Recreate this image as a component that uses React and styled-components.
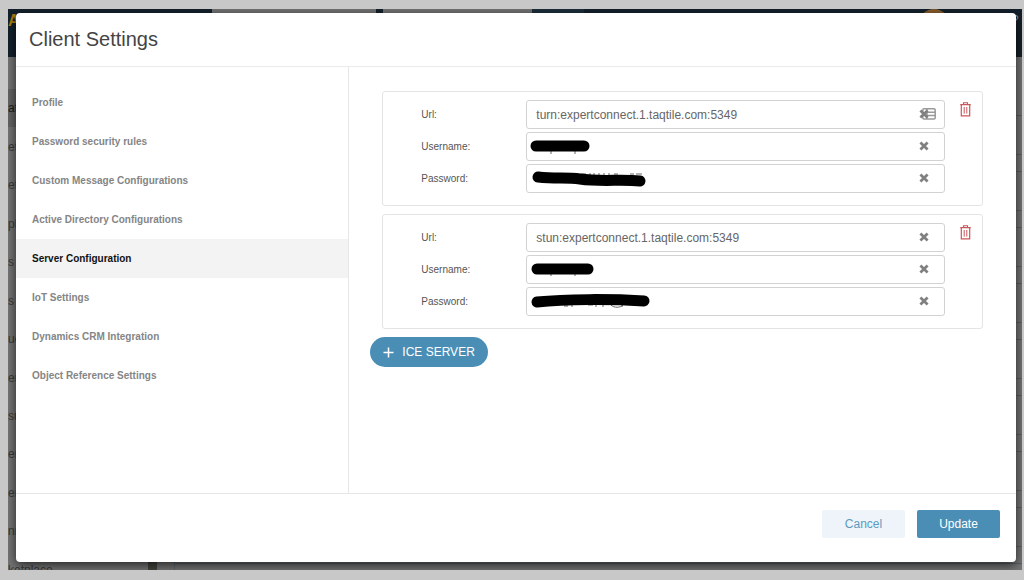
import React, { useState } from "react";
import styled, { createGlobalStyle } from "styled-components";

const menu = [
  "Profile",
  "Password security rules",
  "Custom Message Configurations",
  "Active Directory Configurations",
  "Server Configuration",
  "IoT Settings",
  "Dynamics CRM Integration",
  "Object Reference Settings",
];

const pageMenu = ["at", "et", "ets", "pl", "s", "s l", "ue", "er", "su", "er", "ers", "nn", "ketplace"];

const initialServers = [
  { id: "turn", url: "turn:expertconnect.1.taqtile.com:5349" },
  { id: "stun", url: "stun:expertconnect.1.taqtile.com:5349" },
];

// marker strokes that cover the credentials, in input coordinates
const marks = {
  turn: {
    username: { ink: "M10 14H58", width: 11, rest: "M25 19v3M49 19v3" },
    password: {
      ink: "M12 13C30 15 40 13 54 15C75 18 95 15 114 17",
      width: 11,
      rest: "M46 10h6M55 10h5M64 9v2M68 9v2M73 9v2M78 9v2M83 9v2M88 10h4M104 10h4M110 10h6",
    },
  },
  stun: {
    username: { ink: "M11 14H62", width: 11, rest: "M25 19v2M49 19v2" },
    password: {
      ink: "M11 15C40 12 85 12 118 14",
      width: 11,
      rest: "M38 19h4M46 18v2M62 18h5M70 18v2M77 18v2M96 18v2M85 18c3 3 9 3 12 0",
    },
  },
};

const CloseIcon = () => (
  <svg width="10" height="10" viewBox="0 0 10 10" fill="none" stroke="currentColor" strokeWidth="2.8">
    <path d="M1.4 1.6L8.6 8.4M8.6 1.6L1.4 8.4" />
  </svg>
);

const CardIcon = () => (
  <svg width="14" height="12" viewBox="0 0 14 12" fill="none" stroke="#999" strokeWidth="1.5">
    <rect x="0.8" y="0.8" width="12.4" height="10.2" rx="1.2" />
    <path d="M5 1V11M5 4.3H13M5 7.6H13" />
  </svg>
);

const TrashIcon = () => (
  <svg width="11" height="15" viewBox="0 0 11 15" fill="none" stroke="currentColor">
    <path d="M0.3 2.6H10.7M3.5 2.4V0.8H7.5V2.4" strokeWidth="1.1" />
    <path d="M1.3 2.8V13.9H9.7V2.8" strokeWidth="1.2" />
    <path d="M4.2 5V11.6M6.8 5V11.6" strokeWidth="1" />
  </svg>
);

const PlusIcon = () => (
  <svg width="11" height="11" viewBox="0 0 11 11" fill="none" stroke="currentColor" strokeWidth="1.5">
    <path d="M5.5 0.5V10.5M0.5 5.5H10.5" />
  </svg>
);

const Field = ({ id, label, value, onChange, mark, card }) => (
  <Row>
    <Label htmlFor={id}>{label}:</Label>
    <InputWrap>
      <Input id={id} value={value} onChange={(e) => onChange(e.target.value)} autoComplete="off" />
      {mark && (
        <Mark width="140" height="29" viewBox="0 0 140 29" fill="none" aria-hidden="true">
          <path d={mark.rest} stroke="#666" strokeWidth="1" />
          <path d={mark.ink} stroke="#000" strokeWidth={mark.width} strokeLinecap="round" />
        </Mark>
      )}
      {card && (
        <CardBadge>
          <CardIcon />
        </CardBadge>
      )}
      <ClearButton type="button" aria-label={`Clear ${label}`} onClick={() => onChange("")}>
        <CloseIcon />
      </ClearButton>
    </InputWrap>
  </Row>
);

const Server = ({ server, first, onRemove }) => {
  const [url, setUrl] = useState(server.url);
  const [username, setUsername] = useState("");
  const [password, setPassword] = useState("");
  const mark = marks[server.id] || {};

  return (
    <ServerCard>
      <Fields>
        <Field id={`${server.id}-url`} label="Url" value={url} onChange={setUrl} card={first} />
        <Field
          id={`${server.id}-username`}
          label="Username"
          value={username}
          onChange={setUsername}
          mark={mark.username}
        />
        <Field
          id={`${server.id}-password`}
          label="Password"
          value={password}
          onChange={setPassword}
          mark={mark.password}
        />
      </Fields>
      <TrashButton type="button" aria-label="Remove server" onClick={onRemove}>
        <TrashIcon />
      </TrashButton>
    </ServerCard>
  );
};

const App = () => {
  const [active, setActive] = useState("Server Configuration");
  const [servers, setServers] = useState(initialServers);

  const addServer = () => setServers([...servers, { id: `server-${Date.now()}`, url: "" }]);
  const removeServer = (id) => setServers(servers.filter((s) => s.id !== id));

  return (
    <>
      <GlobalStyle />
      <Screen>
        <Frame>
          <Page aria-hidden="true">
            <PageHeader>
              <Logo>A</Logo>
              <HeaderTabs>
                <HeaderTab $size="164px" />
                <HeaderTab $size="149px" />
              </HeaderTabs>
              <HeaderShade />
              <Avatar />
              <Help>?</Help>
            </PageHeader>
            <PageBody>
              <PageNav>
                {pageMenu.map((text, i) => (
                  <PageNavItem key={i} $active={i === 0}>
                    {text}
                  </PageNavItem>
                ))}
              </PageNav>
              <Scrollbar />
              <PageRows>
                {Array.from({ length: 9 }, (_, i) => (
                  <PageRow key={i} />
                ))}
              </PageRows>
            </PageBody>
          </Page>

          <Modal role="dialog" aria-labelledby="modal-title">
            <ModalHeader>
              <Title id="modal-title">Client Settings</Title>
            </ModalHeader>
            <ModalBody>
              <Menu>
                {menu.map((item) => (
                  <MenuItem key={item} type="button" $active={item === active} onClick={() => setActive(item)}>
                    {item}
                  </MenuItem>
                ))}
              </Menu>
              <Content>
                <ServerList>
                  {servers.map((server, i) => (
                    <Server
                      key={server.id}
                      server={server}
                      first={i === 0}
                      onRemove={() => removeServer(server.id)}
                    />
                  ))}
                </ServerList>
                <AddButton type="button" onClick={addServer}>
                  <PlusIcon />
                  ICE SERVER
                </AddButton>
              </Content>
            </ModalBody>
            <ModalFooter>
              <Button type="button">Cancel</Button>
              <Button type="button" $primary>
                Update
              </Button>
            </ModalFooter>
          </Modal>
        </Frame>
      </Screen>
    </>
  );
};

//STYLING

const GlobalStyle = createGlobalStyle`
  * {
    box-sizing: border-box;
  }

  body {
    margin: 0;
    background: #c8c8c8;
    font-family: "Liberation Sans", Arial, sans-serif;
  }

  button, input {
    font-family: inherit;
  }

  svg {
    display: block;
  }
`;

const Screen = styled.div`
  display: flex;
  min-height: 100vh;
  padding: 9px 2px 10px 8px;
`;

const Frame = styled.div`
  position: relative;
  display: flex;
  flex: 1;
  padding: 4px 6px 8px 8px;
  overflow: hidden;
`;

const Page = styled.div`
  position: absolute;
  inset: 0;
  display: flex;
  flex-direction: column;
  overflow: hidden;
  background: #757575;
`;

const PageHeader = styled.div`
  display: flex;
  flex: 0 0 48px;
  background: #14212c;
`;

const Logo = styled.div`
  width: 204px;
  padding-top: 3px;
  color: #b07d10;
  font-size: 16px;
  font-weight: bold;
`;

const HeaderTabs = styled.div`
  display: flex;
  gap: 7px;
`;

const HeaderTab = styled.div`
  width: ${(props) => props.$size};
  background: #757575;
`;

const HeaderShade = styled.div`
  width: 52px;
  background: #1c303d;
`;

const Avatar = styled.div`
  width: 32px;
  height: 32px;
  margin: 0 62px 0 auto;
  border-radius: 50%;
  background: #8a6030;
`;

const Help = styled.div`
  width: 10px;
  padding-top: 4px;
  color: #8d969c;
  font-size: 12px;
`;

const PageBody = styled.div`
  display: flex;
  flex: 1;
  min-height: 0;
`;

const PageNav = styled.div`
  display: flex;
  flex-direction: column;
  width: 140px;
  height: 532px;
  padding-top: 32px;
`;

const PageNavItem = styled.div`
  display: flex;
  flex: 1;
  align-items: center;
  background: ${(props) => (props.$active ? "#656565" : "transparent")};
  color: ${(props) => (props.$active ? "#1c1c1c" : "#3a3a3a")};
  font-size: 12px;
  white-space: nowrap;
`;

const Scrollbar = styled.div`
  width: 9px;
  background: #45453f;
`;

const PageRows = styled.div`
  display: flex;
  flex: 1;
  flex-direction: column;
  gap: 16px;
  margin-left: 17px;
  padding-top: 58px;
  border-left: 1px solid #5c686e;
`;

const PageRow = styled.div`
  flex: 0 0 40px;
  border: solid #56616a;
  border-width: 1px 0;
`;

const Modal = styled.div`
  position: relative;
  display: flex;
  flex: 1;
  flex-direction: column;
  min-width: 0;
  border-radius: 4px;
  background: #fff;
  box-shadow: 0 3px 11px rgba(0, 0, 0, 0.7);
`;

const ModalHeader = styled.header`
  padding: 14px 13px 15px;
  border-bottom: 1px solid #eaeaea;
`;

const Title = styled.h1`
  margin: 0;
  color: #444;
  font-size: 20px;
  font-weight: normal;
  line-height: 24px;
`;

const ModalBody = styled.div`
  display: grid;
  flex: 1;
  grid-template-columns: 1fr 2fr;
`;

const Menu = styled.nav`
  display: flex;
  flex-direction: column;
  padding-top: 16px;
  border-right: 1px solid #e6e6e6;
`;

const MenuItem = styled.button`
  height: 39px;
  padding: 0 16px;
  border: 0;
  background: ${(props) => (props.$active ? "#f3f3f3" : "transparent")};
  color: ${(props) => (props.$active ? "#111" : "#858585")};
  font-size: 10px;
  font-weight: bold;
  text-align: left;
  cursor: pointer;
`;

const Content = styled.section`
  padding: 24px 33px 24px 21px;
`;

const ServerList = styled.div`
  display: flex;
  flex-direction: column;
  gap: 8px;
  padding-left: 12px;
`;

const ServerCard = styled.div`
  display: flex;
  align-items: flex-start;
  gap: 12px;
  padding: 8px 9px 12px 38px;
  border: 1px solid #e4e4e4;
  border-radius: 3px;
`;

const Fields = styled.div`
  display: flex;
  flex: 1;
  flex-direction: column;
  gap: 3px;
`;

const Row = styled.div`
  display: flex;
  align-items: center;
`;

const Label = styled.label`
  flex: 0 0 105px;
  color: #555;
  font-size: 10px;
`;

const InputWrap = styled.div`
  position: relative;
  flex: 1;
`;

const Input = styled.input`
  display: block;
  width: 100%;
  height: 29px;
  padding: 0 32px 0 9px;
  border: 1px solid #d2d2d2;
  border-radius: 3px;
  background: #fff;
  color: #666;
  font-size: 12px;
`;

const Mark = styled.svg`
  position: absolute;
  top: 0;
  left: 0;
  pointer-events: none;
`;

const CardBadge = styled.span`
  position: absolute;
  top: 8px;
  right: 9px;
`;

const ClearButton = styled.button`
  position: absolute;
  top: 9px;
  right: 16px;
  padding: 0;
  border: 0;
  background: none;
  color: #808080;
  cursor: pointer;
`;

const TrashButton = styled.button`
  display: flex;
  justify-content: center;
  width: 16px;
  padding: 2px 0;
  border: 0;
  background: none;
  color: #c9575b;
  cursor: pointer;
`;

const AddButton = styled.button`
  display: flex;
  align-items: center;
  gap: 8px;
  height: 30px;
  margin-top: 8px;
  padding: 0 13px;
  border: 0;
  border-radius: 15px;
  background: #4a8eb5;
  color: #fff;
  font-size: 12px;
  cursor: pointer;
`;

const ModalFooter = styled.footer`
  display: flex;
  justify-content: flex-end;
  gap: 12px;
  padding: 16px 16px 24px;
  border-top: 1px solid #e6e6e6;
`;

const Button = styled.button`
  width: 83px;
  height: 28px;
  padding: 0;
  border: 0;
  border-radius: 2px;
  background: ${(props) => (props.$primary ? "#4a8eb5" : "#eef4f9")};
  color: ${(props) => (props.$primary ? "#fff" : "#5c9abf")};
  font-size: 12px;
  cursor: pointer;
`;

export default App;
